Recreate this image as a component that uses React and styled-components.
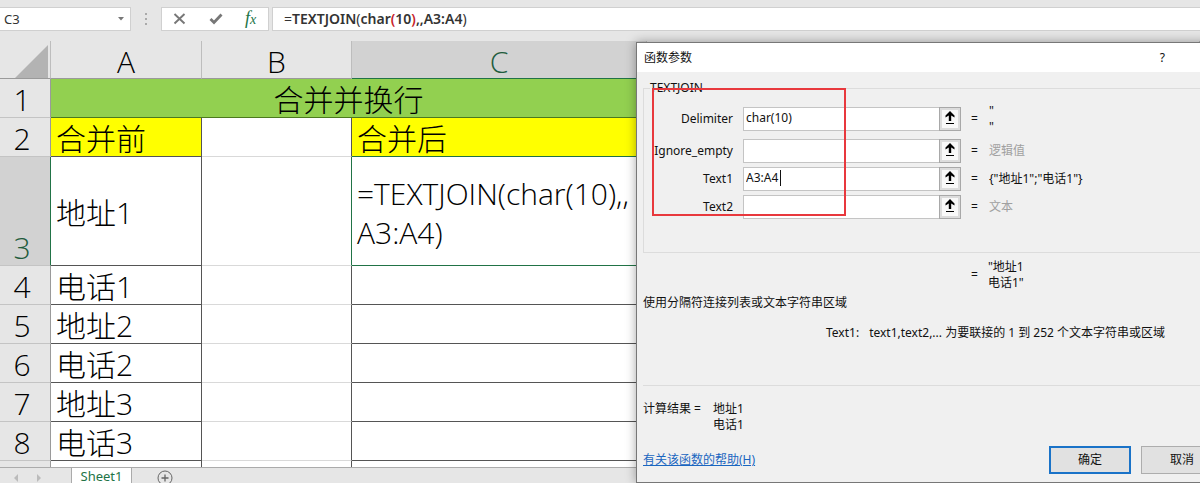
import React from 'react';
import styled, { createGlobalStyle } from 'styled-components';

const rows = [
  { n: 4, before: '电话1' },
  { n: 5, before: '地址2' },
  { n: 6, before: '电话2' },
  { n: 7, before: '地址3' },
  { n: 8, before: '电话3' },
  { n: '', before: '' },
];

const fields = [
  { id: 'delimiter', label: 'Delimiter', value: 'char(10)', result: '"\n"' },
  { id: 'ignore', label: 'Ignore_empty', value: '', result: '逻辑值', hint: true },
  { id: 'text1', label: 'Text1', value: 'A3:A4', result: '{"地址1";"电话1"}', active: true },
  { id: 'text2', label: 'Text2', value: '', result: '文本', hint: true },
];

const FormulaBar = () => (
  <Bar>
    <NameBox>
      <NameInput aria-label="名称框" defaultValue="C3" />
      <PlainButton aria-label="名称列表">
        <svg width="6" height="4" viewBox="0 0 6 4"><path d="M0 0h6L3 3.6z" fill="#777" /></svg>
      </PlainButton>
    </NameBox>
    <Grip width="4" height="14" viewBox="0 0 4 14">
      <path d="M1 1h2v2H1zM1 6h2v2H1zM1 11h2v2H1z" fill="#aaa" />
    </Grip>
    <Tools>
      <PlainButton aria-label="取消">
        <svg width="14" height="14" viewBox="0 0 14 14">
          <path d="M1.500 2l10 9.500M11.500 2l-10 9.500" stroke="#777" strokeWidth="1.900" fill="none" />
        </svg>
      </PlainButton>
      <PlainButton aria-label="输入">
        <svg width="14" height="14" viewBox="0 0 14 14">
          <path d="M1.500 7l3.500 3.500 7.500-8" stroke="#777" strokeWidth="2.800" fill="none" />
        </svg>
      </PlainButton>
      <PlainButton aria-label="插入函数"><Fx>f<small>x</small></Fx></PlainButton>
    </Tools>
    <Formula>
      =<b>TEXTJOIN</b>(<b>char<Paren>(</Paren>10<Paren>)</Paren>,,A3:A4</b>)
    </Formula>
  </Bar>
);

const Sheet = () => (
  <SheetArea>
    <Table>
      <colgroup>
        <col width="51" />
        <col width="151" />
        <col width="150" />
        <col width="295" />
        <col />
      </colgroup>
      <thead>
        <tr>
          <Corner>
            <svg width="33" height="33" viewBox="0 0 33 33"><path d="M33 0v33H0z" fill="#b3b3b3" /></svg>
          </Corner>
          <ColHead>A</ColHead>
          <ColHead>B</ColHead>
          <ColHead $active>C</ColHead>
          <ColHead />
        </tr>
      </thead>
      <tbody>
        <tr>
          <RowHead>1</RowHead>
          <Cell colSpan="3" $fill="#92d050" $center $line="#4c7a1e">合并并换行</Cell>
          <Cell />
        </tr>
        <tr>
          <RowHead>2</RowHead>
          <Cell $fill="#ffff00" $line="#555" $side="#555">合并前</Cell>
          <Cell $side="#555" />
          <Cell $fill="#ffff00" $line="#217346">合并后</Cell>
          <Cell />
        </tr>
        <tr>
          <RowHead $active $tall>3</RowHead>
          <Cell $line="#555" $side="#555">地址1</Cell>
          <Cell $side="#217346" />
          <Cell $line="#217346" $wrap>=TEXTJOIN(char(10),,<br />A3:A4)</Cell>
          <Cell />
        </tr>
        {rows.map(row => (
          <tr key={row.n}>
            <RowHead>{row.n}</RowHead>
            <Cell $line="#555" $side="#555">{row.before}</Cell>
            <Cell $side="#555" />
            <Cell $line="#555" />
            <Cell />
          </tr>
        ))}
      </tbody>
    </Table>
  </SheetArea>
);

const Tabs = () => (
  <TabBar>
    <TabNav>
      <PlainButton aria-label="上一个">
        <svg width="5" height="8" viewBox="0 0 5 8"><path d="M4 0v8L0 4z" fill="#bbb" /></svg>
      </PlainButton>
      <PlainButton aria-label="下一个">
        <svg width="5" height="8" viewBox="0 0 5 8"><path d="M1 0v8l4-4z" fill="#bbb" /></svg>
      </PlainButton>
    </TabNav>
    <Tab>Sheet1</Tab>
    <AddTab aria-label="新工作表">
      <svg width="16" height="16" viewBox="0 0 16 16" fill="none" stroke="#666">
        <circle cx="8" cy="8" r="7" />
        <path d="M8 4.500v7M4.500 8h7" strokeWidth="1.300" />
      </svg>
    </AddTab>
  </TabBar>
);

const Field = ({ field }) => (
  <>
    <FieldLabel htmlFor={field.id}>{field.label}</FieldLabel>
    <RefBox>
      <RefInput id={field.id} defaultValue={field.value} />
      {field.active && <Caret />}
      <RefButton type="button" aria-label={`选择 ${field.label}`}>
        <svg width="10" height="14" viewBox="0 0 10 14">
          <path d="M5 0L9.500 4.500v2L6.200 4.500V10H3.800V4.500L.5 6.500v-2zM1 12h8v1H1z" fill="#000" />
        </svg>
      </RefButton>
    </RefBox>
    <span>=</span>
    <Result $hint={field.hint}>{field.result}</Result>
  </>
);

const FunctionDialog = () => (
  <Dialog role="dialog" aria-labelledby="dialog-title">
    <TitleBar>
      <span id="dialog-title">函数参数</span>
      <PlainButton aria-label="帮助">?</PlainButton>
    </TitleBar>
    <DialogBody>
      <Group>
        <legend>TEXTJOIN</legend>
        <FieldGrid>
          {fields.map(field => <Field key={field.id} field={field} />)}
        </FieldGrid>
      </Group>
      <Preview>
        <span>=</span>
        <Result>{'"地址1\n电话1"'}</Result>
      </Preview>
      <Summary>使用分隔符连接列表或文本字符串区域</Summary>
      <ArgHelp>
        <span>Text1:</span>
        <span>text1,text2,... 为要联接的 1 到 252 个文本字符串或区域</span>
      </ArgHelp>
      <Outcome>
        <span>计算结果 =</span>
        <Result>{'地址1\n电话1'}</Result>
      </Outcome>
      <Footer>
        <a href="#help">有关该函数的帮助(H)</a>
        <Actions>
          <Button type="button" $primary>确定</Button>
          <Button type="button">取消</Button>
        </Actions>
      </Footer>
    </DialogBody>
    <Marker />
  </Dialog>
);

const App = () => {
  return (
    <Window>
      <GlobalStyle />
      <FormulaBar />
      <Sheet />
      <Tabs />
      <FunctionDialog />
    </Window>
  );
}

export default App;

const GlobalStyle = createGlobalStyle`
   * {
      box-sizing: border-box;
   }

   body {
      margin: 0;
      font-family: 'Noto Sans', 'Noto Sans CJK SC', sans-serif;
      font-size: 12px;
      color: #111;
   }

   button, input {
      font: inherit;
      color: inherit;
   }
`

const Window = styled.div`
   position: relative;
   display: flex;
   flex-direction: column;
   height: 100vh;
   overflow: hidden;
   background: #e6e6e6;
`

const PlainButton = styled.button`
   display: flex;
   align-items: center;
   justify-content: center;
   padding: 0;
   border: 0;
   background: none;
`

const Bar = styled.div`
   display: flex;
   align-items: center;
   height: 41px;
   padding: 7px 0 10px;
`

const NameBox = styled.div`
   display: flex;
   align-items: center;
   width: 131px;
   height: 24px;
   padding: 0 6px 0 4px;
   border: 1px solid #d0d0d0;
   border-left: 0;
   background: #fff;
`

const NameInput = styled.input`
   flex: 1;
   min-width: 0;
   padding: 0;
   border: 0;
   outline: 0;
   background: none;
   font-size: 13px;
   color: #333;
`

const Grip = styled.svg`
   margin: 0 13px;
`

const Tools = styled.div`
   display: flex;
   align-items: center;
   gap: 22px;
   width: 108px;
   height: 24px;
   padding: 0 11px;
   border: 1px solid #d0d0d0;
   background: #fff;
`

const Fx = styled.span`
   font-family: 'Liberation Serif', serif;
   font-size: 18px;
   font-style: italic;
   line-height: 18px;
   color: #217346;

   small {
      font-size: 14px;
   }
`

const Formula = styled.div`
   flex: 1;
   height: 24px;
   margin-left: 3px;
   padding-left: 11px;
   border: 1px solid #d0d0d0;
   border-right: 0;
   background: #fff;
   font-size: 14px;
   line-height: 22px;
   color: #333;

   b {
      font-weight: 600;
   }
`

const Paren = styled.span`
   color: #c8232c;
`

const SheetArea = styled.div`
   flex: 1;
   min-height: 0;
   overflow: hidden;
   background: #fff;
`

const Table = styled.table`
   width: 100%;
   table-layout: fixed;
   border-collapse: separate;
   border-spacing: 0;
   font-family: 'Open Sans', 'Noto Sans CJK SC', sans-serif;
   font-size: 30px;
   font-weight: 300;
   line-height: 35px;
   color: #000;
`

const ColHead = styled.th`
   height: 38px;
   padding: 4px 0 0;
   border-right: 1px solid #bdbdbd;
   border-bottom: 1px solid ${props => props.$active ? '#217346' : '#9a9a9a'};
   background: ${props => props.$active ? '#d2d2d2' : '#e6e6e6'};
   color: ${props => props.$active && '#1f5c3d'};
   font-weight: inherit;
   line-height: 33px;
`

const Corner = styled(ColHead)`
   padding: 3px 2px 0 0;

   svg {
      display: block;
      margin-left: auto;
   }
`

const RowHead = styled.th`
   height: ${props => props.$tall ? '109px' : '39px'};
   padding: 3px 6px 0 0;
   border-right: 1px solid ${props => props.$active ? '#217346' : '#9a9a9a'};
   border-bottom: 1px solid #c4c4c4;
   background: ${props => props.$active ? '#d2d2d2' : '#e6e6e6'};
   color: ${props => props.$active && '#1f5c3d'};
   font-weight: inherit;
   vertical-align: bottom;
`

const Cell = styled.td`
   padding: ${props => props.$center ? '3px 0 0' : '3px 0 0 5px'};
   border-right: 1px solid ${props => props.$side || '#d9d9d9'};
   border-bottom: 1px solid ${props => props.$line || '#d9d9d9'};
   background: ${props => props.$fill || '#fff'};
   line-height: ${props => props.$wrap && '39px'};
   text-align: ${props => props.$center && 'center'};
   white-space: nowrap;
`

const TabBar = styled.div`
   display: flex;
   align-items: flex-start;
   height: 16px;
   border-top: 1px solid #ababab;
`

const TabNav = styled.div`
   display: flex;
   gap: 17px;
   width: 71px;
   padding: 6px 0 0 14px;
`

const Tab = styled.button`
   height: 15px;
   width: 61px;
   padding: 0;
   border: 0;
   border-left: 1px solid #ababab;
   border-right: 1px solid #ababab;
   background: #fff;
   color: #217346;
   font-size: 13px;
   line-height: 14px;
`

const AddTab = styled(PlainButton)`
   margin: 2px 0 0 25px;
`

const Dialog = styled.div`
   position: absolute;
   top: 42px;
   left: 53%;
   right: -36px;
   border: 1px solid #777;
   background: #f0f0f0;
   box-shadow: 0 0 10px rgba(0, 0, 0, 0.35);
   line-height: 16px;
`

const TitleBar = styled.div`
   display: flex;
   align-items: center;
   justify-content: space-between;
   height: 29px;
   padding: 0 70px 0 7px;
   background: #fff;
`

const DialogBody = styled.div`
   padding: 8px 12px 8px 6px;
`

const Group = styled.fieldset`
   margin: 0;
   padding: 11px 0 33px;
   border: 1px solid #dcdcdc;

   legend {
      margin-left: 6px;
      padding: 0;
   }
`

const FieldGrid = styled.div`
   display: grid;
   grid-template-columns: 89px 218px 8px 1fr;
   grid-template-rows: 28px;
   grid-auto-rows: 24px;
   row-gap: 4px;
   column-gap: 10px;
   align-items: center;

   > :nth-child(-n + 4) {
      margin-bottom: 4px;
   }
`

const FieldLabel = styled.label`
   text-align: right;
   white-space: nowrap;
`

const RefBox = styled.div`
   position: relative;
   display: flex;
   height: 24px;
`

const RefInput = styled.input`
   flex: 1;
   min-width: 0;
   padding: 0 2px 3px;
   border: 1px solid #c4c4c4;
   border-right: 0;
   outline: 0;
   background: #fff;
`

const Caret = styled.i`
   position: absolute;
   top: 3px;
   left: 37px;
   width: 1px;
   height: 16px;
   background: #111;
`

const RefButton = styled.button`
   display: flex;
   align-items: center;
   justify-content: center;
   width: 22px;
   padding: 0 0 2px;
   border: 1px solid #a8a8a8;
   background: #f8f8f8;
   box-shadow: inset 0 0 0 2px #dcdcdc;
`

const Result = styled.span`
   color: ${props => props.$hint && '#a0a0a0'};
   white-space: pre;
`

const Preview = styled.div`
   display: flex;
   align-items: center;
   gap: 10px;
   padding: 6px 0 0 328px;
`

const Summary = styled.div`
   padding: 4px 0;
`

const ArgHelp = styled.div`
   display: flex;
   gap: 10px;
   height: 71px;
   padding: 10px 0 0 183px;
   border-bottom: 1px solid #dcdcdc;
   white-space: nowrap;
`

const Outcome = styled.div`
   display: flex;
   gap: 12px;
   padding-top: 15px;
`

const Footer = styled.div`
   display: flex;
   align-items: center;
   justify-content: space-between;
   margin-top: 13px;

   a {
      color: #1a66c0;
   }
`

const Actions = styled.div`
   display: flex;
   gap: 10px;
`

const Button = styled.button`
   width: 82px;
   height: 28px;
   padding: 0;
   border: ${props => props.$primary ? '2px solid #1a73c8' : '1px solid #adadad'};
   background: #e1e1e1;
`

/* red frame drawn over the argument fields */
const Marker = styled.div`
   position: absolute;
   top: 45px;
   left: 15px;
   width: 194px;
   height: 128px;
   border: 2px solid #e8383d;
   pointer-events: none;
`
